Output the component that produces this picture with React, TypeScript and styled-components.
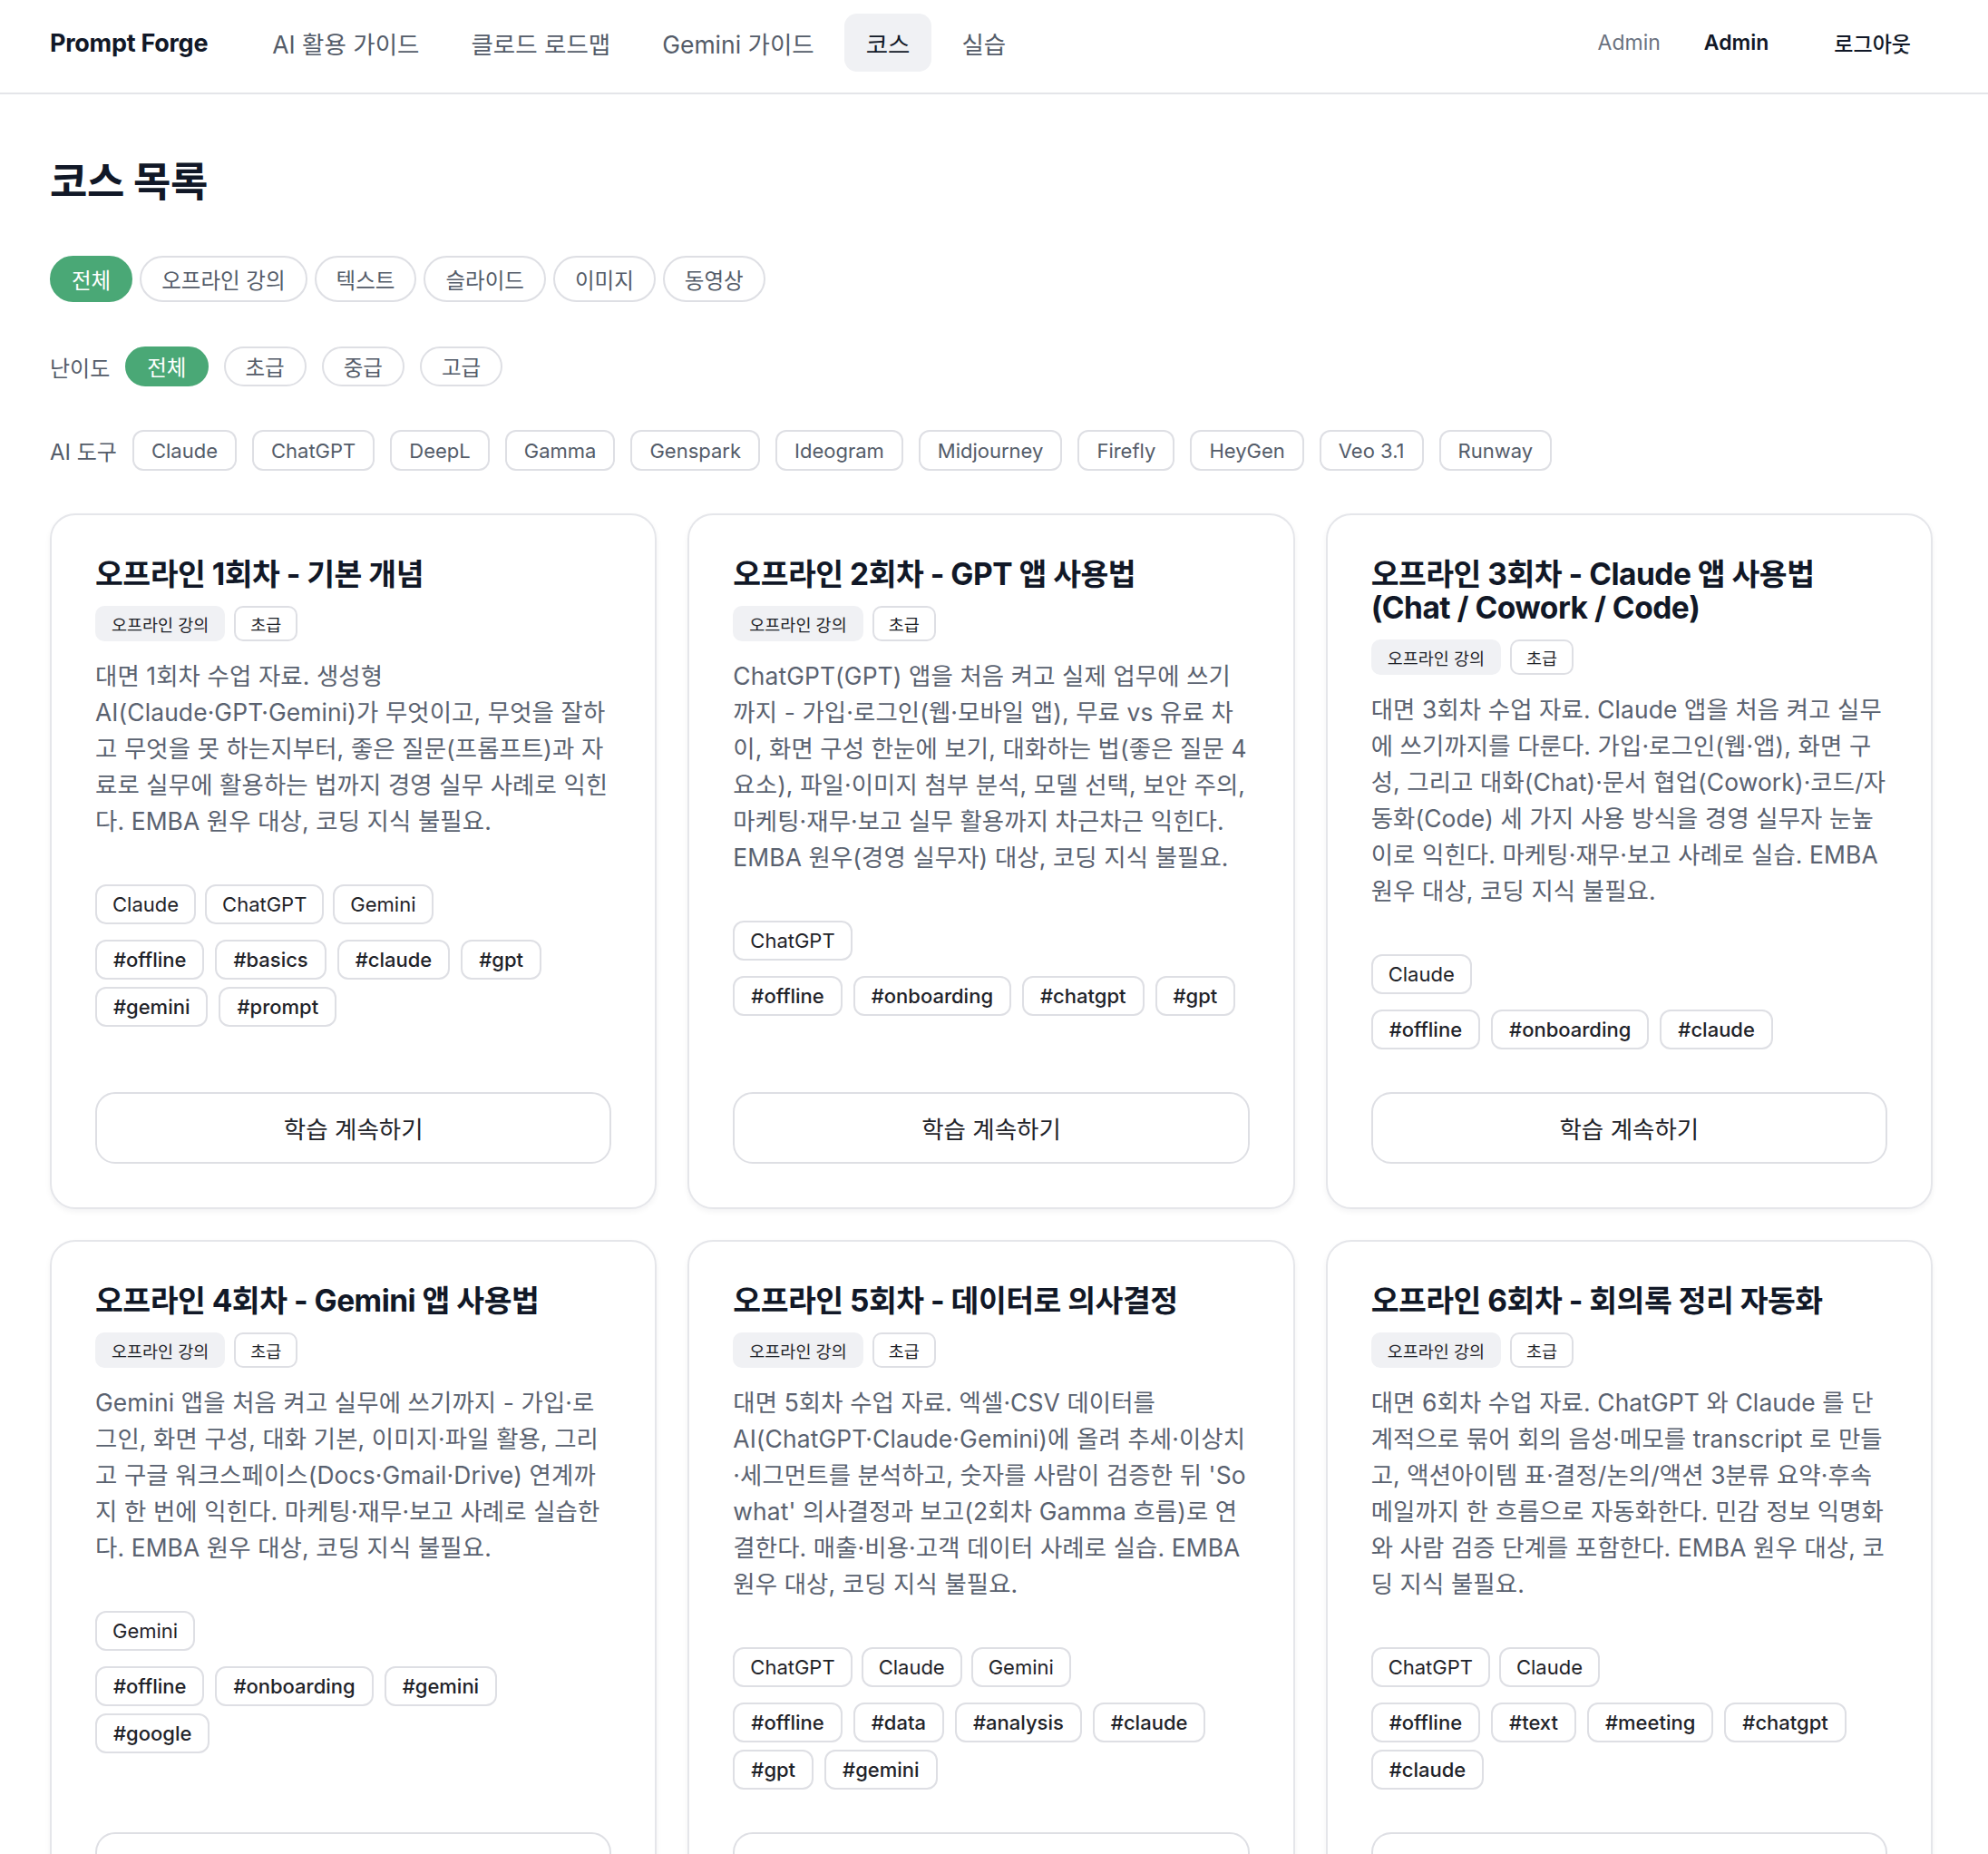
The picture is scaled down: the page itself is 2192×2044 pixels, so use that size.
import styled, { createGlobalStyle } from "styled-components";

const colors = {
  textPrimary: "#111827",
  textBody: "#1f2329",
  textSecondary: "#545c69",
  textMuted: "#5a6270",
  border: "#dedfe4",
  cardBorder: "#e5e6ea",
  pillBg: "#f0f1f4",
  accentGreen: "#4aa876",
};

const GlobalStyle = createGlobalStyle`
  * {
    box-sizing: border-box;
  }

  body {
    margin: 0;
    background: #ffffff;
    color: ${colors.textPrimary};
    font-family: Inter, "Noto Sans CJK KR", "Noto Sans", sans-serif;
  }
`;

/* ---------- top navigation ---------- */

const Header = styled.header`
  height: 104px;
  padding: 0 61px 8px 55px;
  display: flex;
  align-items: center;
  border-bottom: 2px solid #e4e5e9;
`;

const Brand = styled.span`
  font-size: 27px;
  font-weight: 700;
  letter-spacing: -0.01em;
  margin-right: 47px;
`;

const NavList = styled.nav`
  display: flex;
  align-items: center;
  gap: 9px;
`;

const NavLink = styled.a<{ $active?: boolean }>`
  height: 64px;
  padding: 0 24px;
  display: flex;
  align-items: center;
  border-radius: 14px;
  font-size: 26.5px;
  color: ${(p) => (p.$active ? colors.textPrimary : colors.textSecondary)};
  background: ${(p) => (p.$active ? colors.pillBg : "transparent")};
  cursor: pointer;
`;

const UserArea = styled.div`
  margin-left: auto;
  display: flex;
  align-items: center;
  gap: 24px;
`;

const UserName = styled.span`
  font-size: 23px;
  color: #6b7280;
`;

const GhostButton = styled.button<{ $bold?: boolean }>`
  height: 56px;
  padding: 0 24px;
  border: none;
  background: none;
  font-family: inherit;
  font-size: 23px;
  font-weight: ${(p) => (p.$bold ? 600 : 500)};
  color: ${colors.textPrimary};
  cursor: pointer;
`;

/* ---------- filters ---------- */

const Main = styled.main`
  padding: 72px 61px 80px 55px;
`;

const PageTitle = styled.h1`
  margin: 0 0 56px;
  font-size: 45px;
  line-height: 50px;
  font-weight: 700;
  letter-spacing: -0.01em;
`;

const FilterRow = styled.div<{ $gap: number; $mb: number }>`
  display: flex;
  align-items: center;
  flex-wrap: wrap;
  gap: ${(p) => p.$gap}px;
  margin-bottom: ${(p) => p.$mb}px;
`;

const FilterLabel = styled.span`
  font-size: 24px;
  color: ${colors.textSecondary};
`;

const Pill = styled.button<{ $active?: boolean; $compact?: boolean }>`
  height: ${(p) => (p.$compact ? 44 : 51)}px;
  padding: 0 22px;
  border-radius: 999px;
  border: 2px solid ${(p) => (p.$active ? colors.accentGreen : colors.border)};
  background: ${(p) => (p.$active ? colors.accentGreen : "#ffffff")};
  color: ${(p) => (p.$active ? "#ffffff" : colors.textSecondary)};
  font-family: inherit;
  font-size: 23.5px;
  cursor: pointer;
`;

const ToolChip = styled.button`
  height: 45px;
  padding: 0 19px;
  border-radius: 12px;
  border: 2px solid ${colors.border};
  background: #ffffff;
  color: ${colors.textSecondary};
  font-family: inherit;
  font-size: 22px;
  cursor: pointer;
`;

/* ---------- course cards ---------- */

const CardGrid = styled.div`
  display: grid;
  grid-template-columns: repeat(3, 1fr);
  gap: 34px;
`;

const Card = styled.article`
  display: flex;
  flex-direction: column;
  padding: 47px 48px 48px;
  border: 2px solid ${colors.cardBorder};
  border-radius: 28px;
  background: #ffffff;
  box-shadow: 0 3px 6px rgba(17, 24, 39, 0.05);
`;

const CardBody = styled.div`
  flex: 1;
`;

const CardTitle = styled.h2`
  margin: 0;
  font-size: 33.5px;
  line-height: 37px;
  font-weight: 700;
  letter-spacing: -0.015em;
  color: ${colors.textPrimary};
`;

const BadgeRow = styled.div`
  display: flex;
  gap: 10px;
  margin-top: 16px;
`;

const Badge = styled.span<{ $outlined?: boolean }>`
  height: 39px;
  padding: 0 16px;
  display: inline-flex;
  align-items: center;
  border-radius: 10px;
  font-size: 18.5px;
  color: ${colors.textBody};
  background: ${(p) => (p.$outlined ? "#ffffff" : colors.pillBg)};
  border: 2px solid ${(p) => (p.$outlined ? colors.border : colors.pillBg)};
`;

const Description = styled.p`
  margin: 18px 0 0;
  font-size: 26.4px;
  line-height: 40px;
  letter-spacing: 0.12px;
  color: ${colors.textMuted};
`;

const TagRow = styled.div<{ $mt: number; $gap: number }>`
  display: flex;
  flex-wrap: wrap;
  gap: 8px ${(p) => p.$gap}px;
  margin-top: ${(p) => p.$mt}px;
`;

const Tag = styled.span<{ $hash?: boolean }>`
  height: 44px;
  padding: 0 ${(p) => (p.$hash ? 18 : 17)}px;
  display: inline-flex;
  align-items: center;
  border-radius: 12px;
  border: 2px solid ${colors.border};
  font-size: 22px;
  font-weight: ${(p) => (p.$hash ? 500 : 400)};
  color: ${colors.textBody};
`;

const ContinueButton = styled.button`
  margin-top: 47px;
  height: 79px;
  width: 100%;
  border: 2px solid ${colors.border};
  border-radius: 22px;
  background: #ffffff;
  font-family: inherit;
  font-size: 26.5px;
  color: ${colors.textBody};
  cursor: pointer;
`;

interface Course {
  title: string;
  description: string;
  tools: string[];
  tags: string[];
}

const courses: Course[] = [
  {
    title: "오프라인 1회차 - 기본 개념",
    description:
      "대면 1회차 수업 자료. 생성형 AI(Claude·GPT·Gemini)가 무엇이고, 무엇을 잘하고 무엇을 못 하는지부터, 좋은 질문(프롬프트)과 자료로 실무에 활용하는 법까지 경영 실무 사례로 익힌다. EMBA 원우 대상, 코딩 지식 불필요.",
    tools: ["Claude", "ChatGPT", "Gemini"],
    tags: ["offline", "basics", "claude", "gpt", "gemini", "prompt"],
  },
  {
    title: "오프라인 2회차 - GPT 앱 사용법",
    description:
      "ChatGPT(GPT) 앱을 처음 켜고 실제 업무에 쓰기까지 - 가입·로그인(웹·모바일 앱), 무료 vs 유료 차이, 화면 구성 한눈에 보기, 대화하는 법(좋은 질문 4요소), 파일·이미지 첨부 분석, 모델 선택, 보안 주의, 마케팅·재무·보고 실무 활용까지 차근차근 익힌다. EMBA 원우(경영 실무자) 대상, 코딩 지식 불필요.",
    tools: ["ChatGPT"],
    tags: ["offline", "onboarding", "chatgpt", "gpt"],
  },
  {
    title: "오프라인 3회차 - Claude 앱 사용법 (Chat / Cowork / Code)",
    description:
      "대면 3회차 수업 자료. Claude 앱을 처음 켜고 실무에 쓰기까지를 다룬다. 가입·로그인(웹·앱), 화면 구성, 그리고 대화(Chat)·문서 협업(Cowork)·코드/자동화(Code) 세 가지 사용 방식을 경영 실무자 눈높이로 익힌다. 마케팅·재무·보고 사례로 실습. EMBA 원우 대상, 코딩 지식 불필요.",
    tools: ["Claude"],
    tags: ["offline", "onboarding", "claude"],
  },
  {
    title: "오프라인 4회차 - Gemini 앱 사용법",
    description:
      "Gemini 앱을 처음 켜고 실무에 쓰기까지 - 가입·로그인, 화면 구성, 대화 기본, 이미지·파일 활용, 그리고 구글 워크스페이스(Docs·Gmail·Drive) 연계까지 한 번에 익힌다. 마케팅·재무·보고 사례로 실습한다. EMBA 원우 대상, 코딩 지식 불필요.",
    tools: ["Gemini"],
    tags: ["offline", "onboarding", "gemini", "google"],
  },
  {
    title: "오프라인 5회차 - 데이터로 의사결정",
    description:
      "대면 5회차 수업 자료. 엑셀·CSV 데이터를 AI(ChatGPT·Claude·Gemini)에 올려 추세·이상치·세그먼트를 분석하고, 숫자를 사람이 검증한 뒤 'So what' 의사결정과 보고(2회차 Gamma 흐름)로 연결한다. 매출·비용·고객 데이터 사례로 실습. EMBA 원우 대상, 코딩 지식 불필요.",
    tools: ["ChatGPT", "Claude", "Gemini"],
    tags: ["offline", "data", "analysis", "claude", "gpt", "gemini"],
  },
  {
    title: "오프라인 6회차 - 회의록 정리 자동화",
    description:
      "대면 6회차 수업 자료. ChatGPT 와 Claude 를 단계적으로 묶어 회의 음성·메모를 transcript 로 만들고, 액션아이템 표·결정/논의/액션 3분류 요약·후속 메일까지 한 흐름으로 자동화한다. 민감 정보 익명화와 사람 검증 단계를 포함한다. EMBA 원우 대상, 코딩 지식 불필요.",
    tools: ["ChatGPT", "Claude"],
    tags: ["offline", "text", "meeting", "chatgpt", "claude"],
  },
];

const navItems = ["AI 활용 가이드", "클로드 로드맵", "Gemini 가이드", "코스", "실습"];
const typeFilters = ["전체", "오프라인 강의", "텍스트", "슬라이드", "이미지", "동영상"];
const levelFilters = ["전체", "초급", "중급", "고급"];
const toolFilters = [
  "Claude",
  "ChatGPT",
  "DeepL",
  "Gamma",
  "Genspark",
  "Ideogram",
  "Midjourney",
  "Firefly",
  "HeyGen",
  "Veo 3.1",
  "Runway",
];

function CourseCard({ course }: { course: Course }) {
  return (
    <Card>
      <CardBody>
        <CardTitle>{course.title}</CardTitle>
        <BadgeRow>
          <Badge>오프라인 강의</Badge>
          <Badge $outlined>초급</Badge>
        </BadgeRow>
        <Description>{course.description}</Description>
        <TagRow $mt={50} $gap={10}>
          {course.tools.map((t) => (
            <Tag key={t}>{t}</Tag>
          ))}
        </TagRow>
        <TagRow $mt={17} $gap={12}>
          {course.tags.map((t) => (
            <Tag key={t} $hash>
              #{t}
            </Tag>
          ))}
        </TagRow>
      </CardBody>
      <ContinueButton>학습 계속하기</ContinueButton>
    </Card>
  );
}

export default function App() {
  return (
    <>
      <GlobalStyle />
      <Header>
        <Brand>Prompt Forge</Brand>
        <NavList>
          {navItems.map((item) => (
            <NavLink key={item} $active={item === "코스"}>
              {item}
            </NavLink>
          ))}
        </NavList>
        <UserArea>
          <UserName>Admin</UserName>
          <GhostButton $bold>Admin</GhostButton>
          <GhostButton>로그아웃</GhostButton>
        </UserArea>
      </Header>

      <Main>
        <PageTitle>코스 목록</PageTitle>

        <FilterRow $gap={8} $mb={49}>
          {typeFilters.map((f) => (
            <Pill key={f} $active={f === "전체"}>
              {f}
            </Pill>
          ))}
        </FilterRow>

        <FilterRow $gap={17} $mb={48}>
          <FilterLabel>난이도</FilterLabel>
          {levelFilters.map((f) => (
            <Pill key={f} $compact $active={f === "전체"}>
              {f}
            </Pill>
          ))}
        </FilterRow>

        <FilterRow $gap={17} $mb={47}>
          <FilterLabel>AI 도구</FilterLabel>
          {toolFilters.map((f) => (
            <ToolChip key={f}>{f}</ToolChip>
          ))}
        </FilterRow>

        <CardGrid>
          {courses.map((c) => (
            <CourseCard key={c.title} course={c} />
          ))}
        </CardGrid>
      </Main>
    </>
  );
}
